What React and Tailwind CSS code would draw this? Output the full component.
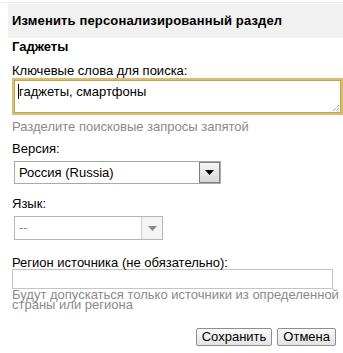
export default function App() {
  return (
    <div className="w-[343px] h-[353px] bg-white pt-[2px] text-[13px] text-black" style={{ fontFamily: '"Liberation Sans", Arial, sans-serif' }}>
      <div className="border-t border-[#ececec]" />
      {/* Header */}
      <div className="ml-[8px] mt-[1px] h-[34px] bg-[#f1f1f1] pl-[4px] flex items-center">
        <span className="font-bold leading-[16px] tracking-[0.15px]">Изменить персонализированный раздел</span>
      </div>

      <div className="pl-[12px]">
        <div className="mt-[1px] font-bold leading-[16px]">Гаджеты</div>

        <div className="mt-[9px] leading-[14px]">Ключевые слова для поиска:</div>
        <div className="mt-0 h-[37px] w-[331px] border-2 border-[#d9bd72] bg-white relative">
          <div className="absolute inset-0 border border-[#c9a24a] pl-[3px] pt-[4px] leading-[14px]">
            <span className="border-l border-black">гаджеты, смартфоны</span>
          </div>
          <svg className="absolute right-[1px] bottom-[1px]" width="8" height="8" viewBox="0 0 8 8">
            <path d="M7 1 L1 7 M7 4 L4 7" stroke="#666" strokeWidth="1" strokeDasharray="1 1" />
          </svg>
        </div>
        <div className="mt-[5px] leading-[14px] text-[#8a8a8a]">Разделите поисковые запросы запятой</div>

        <div className="mt-[8px] leading-[14px]">Версия:</div>
        <div className="mt-[5px] ml-[2px] h-[23px] w-[207px] border border-[#a9a9a9] flex bg-white">
          <div className="flex-1 flex items-center pl-[4px] leading-[14px]">Россия (Russia)</div>
          <div className="w-[21px] border border-[#7e7e7e] bg-gradient-to-b from-[#f6f6f6] to-[#d6d6d6] flex items-center justify-center">
            <svg width="9" height="5" viewBox="0 0 9 5"><path d="M0 0 H9 L4.5 5 Z" fill="#000" /></svg>
          </div>
        </div>

        <div className="mt-[13px] leading-[14px]">Язык:</div>
        <div className="mt-[5px] ml-[2px] h-[24px] w-[149px] border border-[#b5b5b5] flex bg-white">
          <div className="flex-1 flex items-center pl-[4px] leading-[14px] text-[#8a8a8a]">--</div>
          <div className="w-[21px] border-l border-[#cfcfcf] bg-[#f4f4f4] flex items-center justify-center">
            <svg width="9" height="5" viewBox="0 0 9 5"><path d="M0 0 H9 L4.5 5 Z" fill="#8a8a8a" /></svg>
          </div>
        </div>

        <div className="mt-[17px] leading-[12px]">Регион источника (не обязательно):</div>
        <div className="mt-0 h-[20px] w-[321px] border border-[#c4c4c4] bg-white" />
        <div className="mt-[1px] leading-[10px] text-[#8a8a8a] w-[330px]">Будут допускаться только источники из определенной страны или региона</div>

        <div className="mt-[18px] flex justify-end gap-[5px] pr-[7px]">
          <button className="h-[18px] px-[5px] border border-[#8f8f8f] rounded-[2px] bg-gradient-to-b from-[#fbfbfb] to-[#e3e3e3] leading-[14px]">Сохранить</button>
          <button className="h-[18px] px-[5px] border border-[#8f8f8f] rounded-[2px] bg-gradient-to-b from-[#fbfbfb] to-[#e3e3e3] leading-[14px]">Отмена</button>
        </div>
      </div>
    </div>
  )
}
